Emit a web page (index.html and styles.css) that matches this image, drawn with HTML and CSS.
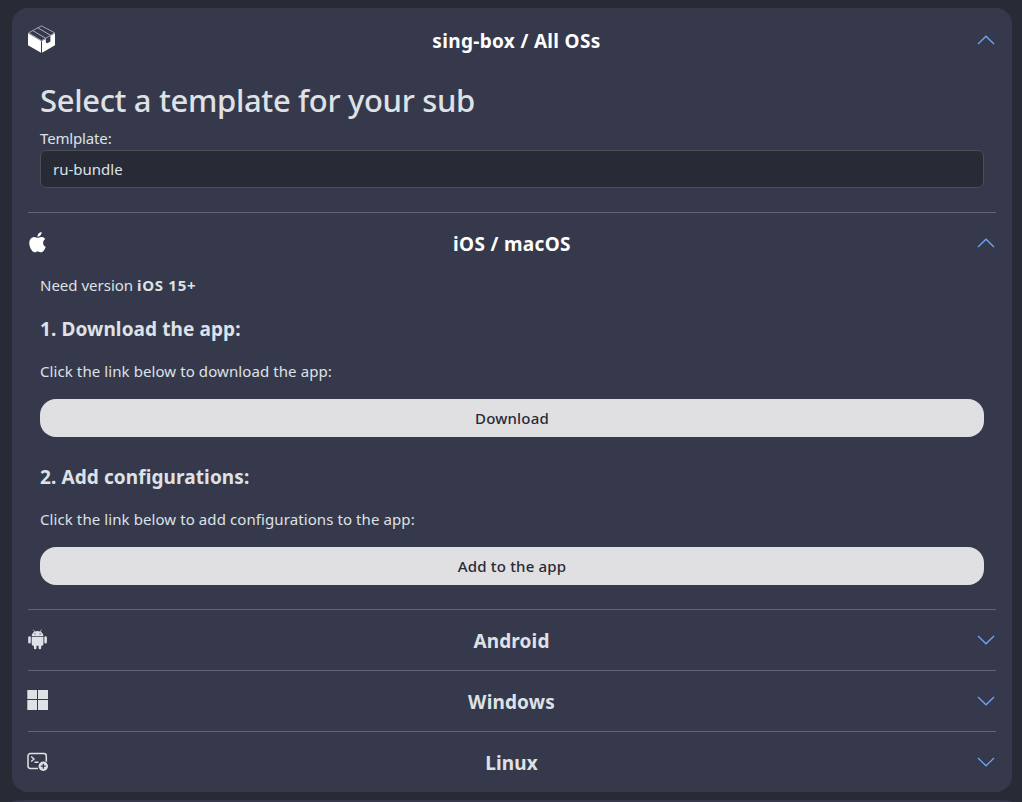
FILE: index.html
```html
<!DOCTYPE html>
<html lang="en">
<head>
<meta charset="utf-8">
<title>sing-box setup</title>
<link rel="stylesheet" href="styles.css">
</head>
<body>
<main class="card">
  <header class="head head-main">
    <svg class="icon-box" viewBox="0 0 28 28"><path d="M.7 7.800 13.500.8 26.700 7.800 13.500 15.800Z" fill="#36394b" stroke="#a9abb5" stroke-width=".9"/><path d="M4.800 5.600 18 13.500M9.800 2.800 23 10.600" fill="none" stroke="#a9abb5" stroke-width="1"/><path d="M0 8.200 13 16V27.800L0 20.200ZM14 16 17.800 13.900V17.400L19.400 18.200 22.400 16.400V10.900L27 8.200V20.200L14 27.800Z" fill="#fff"/></svg>
    <h2 class="title">sing-box / All OSs</h2>
    <svg class="chevron" viewBox="0 0 18 10"><path d="M1 9 9 1.200 17 9"/></svg>
  </header>
  <section class="template">
    <h1 class="heading">Select a template for your sub</h1>
    <label class="label">Temlplate:</label>
    <div class="select">ru-bundle</div>
  </section>
  <div class="list">
    <section class="item">
      <header class="head open">
        <svg class="icon" viewBox="0 0 22 22"><path transform="translate(.4 0) scale(.845)" d="M12.152 6.896c-.948 0-2.415-1.078-3.96-1.04-2.04.027-3.91 1.183-4.961 3.014-2.117 3.675-.546 9.103 1.519 12.09 1.013 1.454 2.208 3.09 3.792 3.039 1.52-.065 2.09-.987 3.935-.987 1.831 0 2.35.987 3.96.948 1.637-.026 2.676-1.48 3.676-2.948 1.156-1.688 1.636-3.325 1.662-3.415-.039-.013-3.182-1.221-3.22-4.857-.026-3.04 2.48-4.494 2.597-4.559-1.429-2.09-3.623-2.324-4.39-2.376-2-.156-3.675 1.09-4.61 1.09zM15.53 3.83c.843-1.012 1.4-2.427 1.245-3.83-1.207.052-2.662.805-3.532 1.818-.78.896-1.454 2.338-1.273 3.714 1.338.104 2.715-.688 3.559-1.701"/></svg>
        <h2 class="title">iOS / macOS</h2>
        <svg class="chevron" viewBox="0 0 18 10"><path d="M1 9 9 1.200 17 9"/></svg>
      </header>
      <div class="body">
        <p class="text need">Need version <b>iOS 15+</b></p>
        <h3 class="step">1. Download the app:</h3>
        <p class="text click">Click the link below to download the app:</p>
        <button class="button">Download</button>
        <h3 class="step step-two">2. Add configurations:</h3>
        <p class="text click">Click the link below to add configurations to the app:</p>
        <button class="button">Add to the app</button>
      </div>
    </section>
    <section class="item">
      <header class="head">
        <svg class="icon" viewBox="0 0 22 22"><path d="M4.700 6.900C4.900 5 5.900 3.600 7.300 2.800L6.200.8 6.700.5 7.900 2.500Q10.500 1.500 13.100 2.500L14.300.5 14.800.8 13.700 2.800C15.200 3.600 16.200 5 16.400 6.900ZM4.700 7.700H16.400V15.300Q16.400 16.700 15 16.700H14.200V19A1.300 1.300 0 0 1 11.600 19V16.700H9.500V19A1.300 1.300 0 0 1 6.900 19V16.700H6.100Q4.700 16.700 4.700 15.300ZM1.200 8.500A1.300 1.300 0 0 1 3.800 8.500V13.200A1.300 1.300 0 0 1 1.200 13.200ZM17.300 8.500A1.300 1.300 0 0 1 19.900 8.500V13.200A1.300 1.300 0 0 1 17.300 13.200Z"/><circle cx="8" cy="4.900" r=".6" fill="#36394b"/><circle cx="13.100" cy="4.900" r=".6" fill="#36394b"/></svg>
        <h2 class="title">Android</h2>
        <svg class="chevron" viewBox="0 0 18 10"><path d="M1 1 9 8.800 17 1"/></svg>
      </header>
    </section>
    <section class="item">
      <header class="head">
        <svg class="icon" viewBox="0 0 22 22"><path d="M.3 0H10V9H.3ZM11 0H21V9H11ZM.3 10H10V20H.3ZM11 10H21V20H11Z"/></svg>
        <h2 class="title">Windows</h2>
        <svg class="chevron" viewBox="0 0 18 10"><path d="M1 1 9 8.800 17 1"/></svg>
      </header>
    </section>
    <section class="item">
      <header class="head">
        <svg class="icon" viewBox="0 0 22 22"><path d="M11 17.500H3.400A2.400 2.400 0 0 1 1 15.100V4.900A2.400 2.400 0 0 1 3.400 2.500H16.900A2.400 2.400 0 0 1 19.300 4.900V10.800" fill="none" stroke="#dee2e6" stroke-width="1.500"/><path d="M4.200 5.500 7 8 4.200 10.500M7.500 11.200H11.500" fill="none" stroke="#dee2e6" stroke-width="1.400"/><circle cx="16.300" cy="15.200" r="4.700"/><path d="M13.800 15.200H18.800M16.300 12.700V17.700" fill="none" stroke="#36394b" stroke-width="1.300"/></svg>
        <h2 class="title">Linux</h2>
        <svg class="chevron" viewBox="0 0 18 10"><path d="M1 1 9 8.800 17 1"/></svg>
      </header>
    </section>
  </div>
</main>
<div class="card card-next"></div>
</body>
</html>
```
FILE: styles.css
```css
* { box-sizing: border-box; }
html { background: #282a36; }
body {
  margin: 0;
  height: 802px;
  padding: 8px 10px 0 12px;
  overflow: hidden;
  display: flex;
  flex-direction: column;
  gap: 8px;
  font: 400 15px/24px "Noto Sans", "Open Sans", sans-serif;
  color: #dee2e6;
}
h1, h2, h3, p { margin: 0; }
.card {
  flex: none;
  height: 784px;
  padding: 0 16px;
  border-radius: 16px;
  background: #36394b;
}
.card-next { height: 2px; border-radius: 16px 16px 0 0 / 2px 2px 0 0; }
.head {
  display: flex;
  align-items: center;
  height: 60px;
  margin-left: -1px;
  padding-top: 2px;
}
.head-main { height: 66px; padding-top: 0; }
.icon-box { flex: none; width: 28px; height: 28px; margin: 0 0 5px 1px; }
.icon { flex: none; width: 22px; height: 22px; margin-bottom: 2px; fill: #dee2e6; }
.open .icon { fill: #fff; }
.title {
  flex: 1;
  padding-right: 3px;
  font-size: 19px;
  line-height: 24px;
  font-weight: 700;
  letter-spacing: 0.15px;
  text-align: center;
}
.head-main .title, .open .title { color: #fff; letter-spacing: 0.33px; padding-right: 2px; }
.head-main .title { padding-right: 0; }
.chevron { flex: none; width: 18px; height: 10px; margin: 0 1px 2px 0; fill: none; stroke: #6ea8fe; stroke-width: 1.2; }
.template { height: 138px; padding: 6px 12px 0; }
.heading { font-size: 31px; line-height: 40px; font-weight: 500; letter-spacing: -0.33px; }
.label { display: block; height: 22px; margin-top: 8px; line-height: 20px; letter-spacing: -0.15px; }
.select {
  height: 38px;
  padding: 0 12px;
  border: 1px solid #495057;
  border-radius: 6px;
  background: #282a36;
  line-height: 36px;
}
.item { border-top: 1px solid #626572; }
.body { height: 336px; padding: 0 12px; }
.need b { letter-spacing: 0.7px; }
.step { margin-top: 19px; font-size: 19px; line-height: 26px; font-weight: 700; letter-spacing: 0.1px; }
.step-two { margin-top: 27px; }
.click { margin: 17px 0 16px; letter-spacing: 0.09px; }
.button {
  display: block;
  width: 100%;
  height: 38px;
  padding: 0;
  border: 0;
  border-radius: 16px;
  background: #e0e0e2;
  color: #282a36;
  font: 500 15px/38px "Noto Sans", "Open Sans", sans-serif;
  letter-spacing: 0.18px;
}
```
